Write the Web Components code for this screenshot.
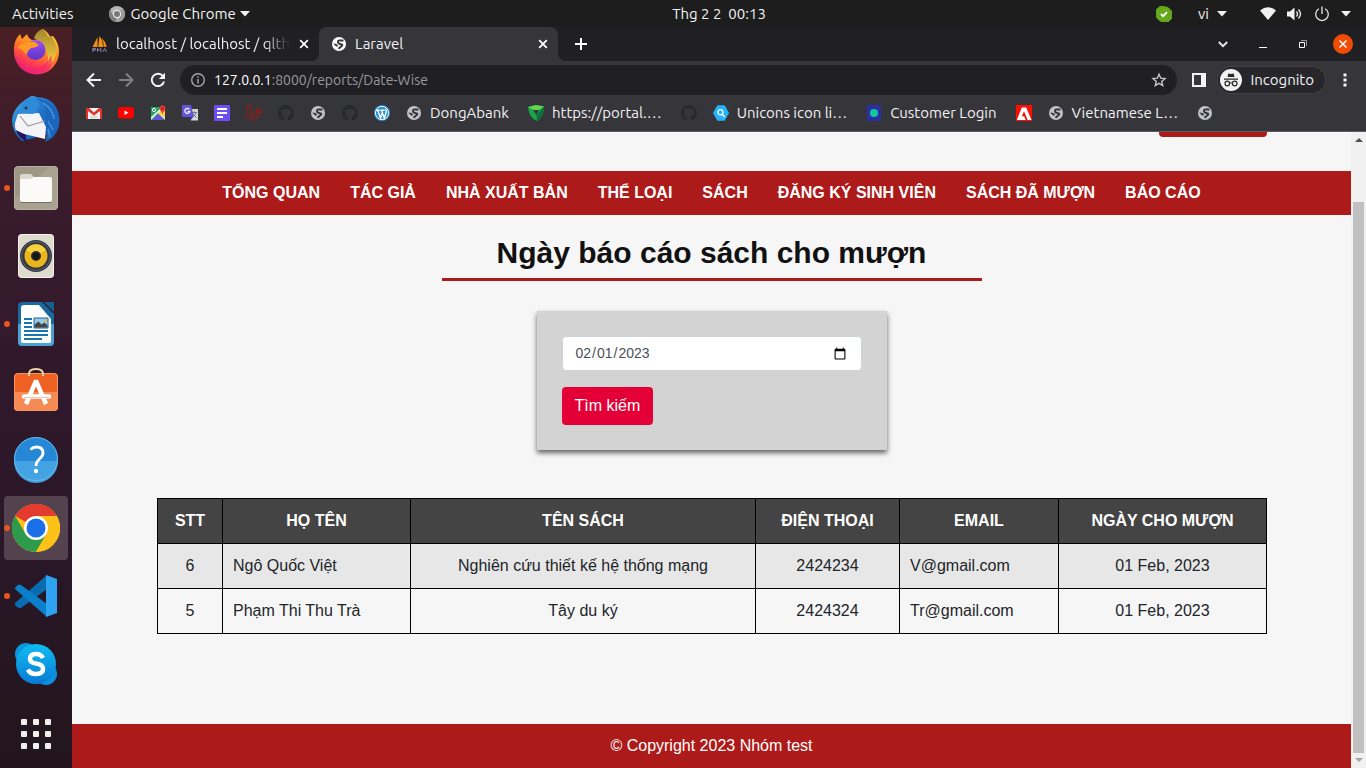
<!DOCTYPE html>
<html lang="vi">
<head>
<meta charset="utf-8">
<title>Laravel</title>
<style>
  html, body { height: 100%; }
  body { margin: 0; background: #1d1d1d; font-family: Ubuntu, "Noto Sans", sans-serif; }
</style>
</head>
<body>
<desktop-shell>
  <top-panel slot="panel"></top-panel>
  <app-dock slot="dock"></app-dock>
  <browser-window>
    <tab-strip slot="tabs"></tab-strip>
    <tool-bar slot="toolbar"></tool-bar>
    <bookmark-bar slot="bookmarks"></bookmark-bar>
    <site-page>
      <site-header slot="header"></site-header>
      <site-nav slot="nav"></site-nav>
      <page-title>Ngày báo cáo sách cho mượn</page-title>
      <date-search></date-search>
      <report-table></report-table>
      <site-footer slot="footer">© Copyright 2023 Nhóm test</site-footer>
    </site-page>
  </browser-window>
</desktop-shell>

<script>
const define = (name, html) => {
  const tpl = document.createElement('template');
  tpl.innerHTML = html;
  customElements.define(name, class extends HTMLElement {
    constructor() {
      super();
      this.attachShadow({ mode: 'open' }).append(tpl.content.cloneNode(true));
    }
  });
};

/* ---------- icons: [viewBox, markup] ---------- */
const github = '<path fill="#24292f" d="M8 0a8 8 0 0 0-2.5 15.6c.4.1.5-.2.5-.4v-1.5c-2.200.5-2.700-1-2.700-1-.4-.9-.9-1.200-.9-1.200-.7-.5.1-.5.1-.5.8.1 1.200.8 1.200.8.7 1.200 1.900.9 2.300.7.1-.5.3-.9.5-1.100-1.800-.2-3.600-.9-3.600-4 0-.9.3-1.600.8-2.100-.1-.2-.4-1 .1-2.100 0 0 .7-.2 2.200.8a7.600 7.600 0 0 1 4 0c1.500-1 2.200-.8 2.200-.8.4 1.100.2 1.900.1 2.100.5.6.8 1.300.8 2.100 0 3.100-1.900 3.800-3.700 4 .3.2.6.7.6 1.500v2.200c0 .2.1.5.6.4A8 8 0 0 0 8 0z"/>';
const globe = (disc, land) => `<circle cx="8" cy="8" r="7" fill="${disc}"/><path fill="none" stroke="${land}" stroke-width="1.900" stroke-linejoin="round" d="M12.500 4.500H9.500Q7 4 7 6T10 8.200 9.500 11L7.500 12.800"/><path fill="${land}" d="M2.200 7.600 5.500 8 7.200 9.800 6 10.800 4.500 10z"/>`;
const ICONS = {
  chromeMono: ['0 0 16 16', '<circle cx="8" cy="8" r="8" fill="#b4b4b4"/><path d="M8 4h7a8 8 0 0 1-7 12l3.500-6" fill="#9a9a9a"/><path d="M1.200 4 4.600 10 8 12l-1 4A8 8 0 0 1 1.200 4z" fill="#7f7f7f"/><circle cx="8" cy="8" r="4.200" fill="#e8e8e8"/><circle cx="8" cy="8" r="3" fill="#777"/>'],
  caret: ['0 0 10 6', '<path d="M0 0h10L5 5.500z" fill="#f2f2f2"/>'],
  skypeOk: ['0 0 16 16', '<path d="M4.500 0 12 1.500 15.500 5 16 12l-4 4-7-.5L.8 12 0 4z" stroke="#66a81c" stroke-linejoin="round" fill="#66a81c"/><path d="M5 8l2.200 2.200L11 6.200" stroke="#fff" stroke-width="1.800" fill="none"/>'],
  wifi: ['0 0 16 13', '<path d="M0 3.500Q8-2.800 16 3.500L8 13z" fill="#f2f2f2"/>'],
  volume: ['0 0 16 14', '<path d="M0 4.500h3L7.500.5v13L3 9.500H0z" fill="#f2f2f2"/><path d="M9.500 4.500q2 2.500 0 5M11.500 2.500q4 4.500 0 9" stroke="#f2f2f2" stroke-width="1.300" fill="none"/>'],
  power: ['0 0 16 16', '<path d="M4.800 2.800a6.300 6.300 0 1 0 6.400 0M8 .5v7.500" stroke="#e6e6e6" stroke-width="1.300" fill="none"/>'],
  pma: ['0 0 16 16', '<path d="M.5 11 5.500 1 5.500 11zM6.200 11 7.500 0Q11 5 11 11zM10.500 3Q14 6 14.500 11H12z" fill="#f29111"/><path d="M10 2 12 11" stroke="#a75c00" fill="none"/><path d="M.8 15.800v-3.300h2.500v1.700H.8M5.500 15.800v-3.300l1.700 1.700 1.700-1.700v3.300M11 15.800l1.700-3.300 1.700 3.300" stroke="#8e87b8" fill="none"/>'],
  globe: ['0 0 16 16', globe('#c1c3cb', '#36363a')],
  globeLight: ['0 0 16 16', globe('#fff', '#36363a')],
  close: ['0 0 10 10', '<path d="M1.200 1.200l7.600 7.600M8.800 1.200 1.200 8.800" stroke="#fff" stroke-width="1.800"/>'],
  plus: ['0 0 12 12', '<path d="M6 0v12M0 6h12" stroke="#fff" stroke-width="2"/>'],
  chevron: ['0 0 10 7', '<path d="M.8 1 5 5.200 9.200 1" stroke="#e4e4e6" stroke-width="2" fill="none"/>'],
  minimize: ['0 0 8 8', '<path d="M0 7.500h8" stroke="#fff"/>'],
  restore: ['0 0 8 8', '<path d="M2 .5h5.500V6" stroke="#98989b" fill="none"/><path d="M.5 2.500h5v5h-5z" stroke="#fff" fill="none"/>'],
  closeWin: ['0 0 20 20', '<circle cx="10" cy="10" r="10" fill="#f24b05"/><path d="M6.500 6.500l7 7M13.500 6.500l-7 7" stroke="#fff" stroke-width="1.500"/>'],
  back: ['0 0 16 16', '<path d="M15 8H2M8 1.500 1.500 8 8 14.500" stroke="#f4f4f5" stroke-width="2" fill="none"/>'],
  forward: ['0 0 16 16', '<path d="M1 8h13M8 1.500 14.500 8 8 14.500" stroke="#808085" stroke-width="2" fill="none"/>'],
  reload: ['0 0 16 16', '<path d="M13 4.200A6.200 6.200 0 1 0 14 9.500" stroke="#f4f4f5" stroke-width="2" fill="none"/><path d="M15 .8V7H8.800z" fill="#f4f4f5"/>'],
  info: ['0 0 16 16', '<circle cx="8" cy="8" r="6.300" stroke="#a4a5a9" stroke-width="1.400" fill="none"/><path d="M8 7v4.500M8 4.300v1.500" stroke="#a4a5a9" stroke-width="1.500"/>'],
  star: ['0 0 16 16', '<path d="M8 2.200l1.700 4 4.300.4-3.300 2.800 1 4.200L8 11.300l-3.700 2.300 1-4.200L2 6.600l4.300-.4z" stroke="#c6c6ca" stroke-width="1.400" fill="none"/>'],
  sidePanel: ['0 0 14 14', '<path d="M1 1h12v12H1z" stroke="#f4f4f5" stroke-width="2" fill="none"/><path d="M9 0h5v14H9z" fill="#f4f4f5"/>'],
  incognito: ['0 0 22 22', '<circle cx="11" cy="11" r="11" fill="#f1f1f2"/><path d="M7.500 8 8.300 4.500l2.700.6 2.700-.6.800 3.500zM4 9.500h14v1.200H4z" fill="#28282b"/><circle cx="7.300" cy="14.500" r="2.300" fill="none" stroke="#28282b" stroke-width="1.200"/><circle cx="14.700" cy="14.500" r="2.300" fill="none" stroke="#28282b" stroke-width="1.200"/><path d="M9.500 14.200q1.500-.8 3 0" stroke="#28282b" fill="none"/>'],
  dots: ['0 0 4 14', '<path d="M.5.500h3v3h-3zM.5 5.500h3v3h-3zM.5 10.500h3v3h-3z" fill="#f4f4f5"/>'],
  gmail: ['0 0 16 16', '<path d="M1 3h14v11H1z" fill="#f3f3f3"/><path d="M3 13.500 8 9l5 4.500z" fill="#dcdcdc"/><path d="M1 3h2l5 4.500L13 3h2l1 1v10h-2V6L8 10.500 2 6v8H0V4z" fill="#e0342a"/>'],
  youtube: ['0 0 16 16', '<rect y="2" width="16" height="11.500" rx="3" fill="#f00"/><path d="M6.500 5.500v4.500l4-2.200z" fill="#fff"/>'],
  maps: ['0 0 16 16', '<path d="M1 2h12v13H1z" fill="#1ea362"/><path d="M1 12 11 3l4 2v10l-7-7-7 7z" fill="#e9e9e9"/><path d="M8 8l7-4v9z" fill="#ffd04b"/><path d="M8 9l6 6H2.500z" fill="#6a50e0"/><circle cx="4" cy="5" r="1.600" fill="none" stroke="#fff"/><path d="M9.500 3.500a3 3 0 1 1 6 0c0 2-2.500 3-3 6-.5-3-3-4-3-6z" fill="#ea3a2d"/><circle cx="12.500" cy="3.500" r="1.100" fill="#8d1c16"/>'],
  translate: ['0 0 16 16', '<path d="M6 4h10v11.500H9z" fill="#d5d5d5"/><path d="M10 7.500h5M12.500 6.500v1M14 7.500q-.5 3-3.500 4.500M11 9l3.500 3.500" stroke="#6c7880" fill="none"/><path d="M0 0h9l3 12H1.500Q0 12 0 10.500z" fill="#6155dd"/><path d="M7.500 12H11l-2.500 3.500z" fill="#3c35a0"/><path d="M7.300 4.300A2.500 2.500 0 1 0 7.800 6.300H5.600" stroke="#fff" stroke-width="1.200" fill="none"/>'],
  form: ['0 0 16 16', '<rect width="16" height="16" rx="1" fill="#6c4df6"/><path d="M3 4h10M3 8h10M3 12h6" stroke="#fff" stroke-width="2"/>'],
  laravel: ['0 0 16 16', '<path d="M.5 1.500v10.500L6.500 15.500 13 11.500V8.500M5.500 1.500V9.500L13 5.500M.5 1.500 3 3 5.500 1.500 3 .5zM10 4.500 12.800 6 15.500 4.500 12.800 3zM10 4.500V7L12.800 8.500 15.500 7V4.500M5.500 9.500 3 11 6.500 13 12.800 9M6.500 13v2.500" stroke="#a81414" stroke-width=".8" fill="none"/>'],
  github: ['0 0 16 16', github],
  wordpress: ['0 0 16 16', '<circle cx="8" cy="8" r="8" fill="#2a8fd0"/><circle cx="8" cy="8" r="6.600" stroke="#fff" stroke-width=".9" fill="none"/><path d="M2.200 5.200h3.500M3.800 5.500l2.700 7.500L8 8.500M6.500 5.200h4M7.500 5.500l2.800 7.500 2-6.200q.3-1.500-1-2.800" stroke="#fff" stroke-width="1.400" fill="none"/>'],
  shield: ['0 0 16 16', '<path d="M8 0l8 1.500Q16.500 11 9 16 1 13 0 2z" fill="#1aa648"/><path d="M0 2l8-2 8 1.500-5 3.500H5.500z" fill="#62d44e"/><path d="M5 5h6l-2.500 5z" fill="#36363a"/><path d="M8.500 10 16 1.500Q16.500 11 9 16z" fill="#0d6f3a"/>'],
  unicons: ['0 0 16 16', '<path d="M4.500.8h7L15.500 8l-4 7.200h-7L.5 8z" fill="#24b3fb" stroke="#24b3fb" stroke-linejoin="round"/><circle cx="7.400" cy="7.200" r="2.600" stroke="#fff" stroke-width="1.200" fill="none"/><path d="M9.200 9.200l2.600 2.800" stroke="#fff" stroke-width="1.400"/>'],
  login: ['0 0 16 16', '<path d="M1 0h14v16H1z" fill="#2c2fa3"/><circle cx="8" cy="8" r="4" fill="#0fc99b"/>'],
  adobe: ['0 0 16 16', '<path d="M0 0h16v16H0z" fill="#fa0f00"/><path d="M5.800 2.500h4.400L15.500 15h-3.800L8 6.300l-2.200 5h2.400l1.500 3.700H.8z" fill="#fff"/>'],
  up: ['0 0 8 4', '<path d="M0 4h8L4 0z" fill="#505050"/>'],
  down: ['0 0 8 4', '<path d="M0 0h8L4 4z" fill="#a3a3a3"/>'],

  firefox: ['0 0 48 48', '<defs><linearGradient id="f1" x1=".8" y1="0" x2=".3" y2="1"><stop offset="0" stop-color="#ffd43d"/><stop offset=".45" stop-color="#ff8a1e"/><stop offset=".75" stop-color="#ff3f4e"/><stop offset="1" stop-color="#e0158a"/></linearGradient><linearGradient id="f2" x1="0" y1="0" x2="0" y2="1"><stop offset="0" stop-color="#a04df0"/><stop offset="1" stop-color="#5936c8"/></linearGradient><linearGradient id="f3" x1="0" y1="0" x2="0" y2="1"><stop offset="0" stop-color="#a0882e"/><stop offset="1" stop-color="#ffcf3e"/></linearGradient></defs><g transform="translate(0 -2)"><path d="M8 8l2 5 5-5q1 4 5 6 5-1 8 1-1-7 3-12 5 3 7 8l3-1q6 7 6 16A22 22 0 0 1 2 26Q1 15 8 8z" fill="url(#f1)"/><path d="M22 12q2-6 8-9 4 2 6 8l3-1q6 8 5.500 17-2 9-9.500 13 3-8-2-18-6-7-11-10z" fill="url(#f3)"/><circle cx="23.500" cy="24" r="10" fill="url(#f2)"/><path d="M5 21q8-6 18-5l4 3q-3 3-8 3-4 3-4 7-5-6-10-8z" fill="#ff9a26"/><path d="M3 28q7 17 22 13 11-2 14-12 4 16-14 18Q8 47 3 28z" fill="#f0256e" opacity=".65"/></g>'],
  thunderbird: ['0 0 48 48', '<defs><linearGradient id="t1" x1="0" y1="0" x2="1" y2="1"><stop offset="0" stop-color="#42a8e8"/><stop offset=".5" stop-color="#1f72c8"/><stop offset="1" stop-color="#1748a6"/></linearGradient></defs><path d="M16 2q5-4 8-1 14 0 20 10 6 12 2 22-2 7-10 12 2-4 1-7L10 45Q0 36 0 24 1 11 16 2z" fill="url(#t1)"/><path d="M6 18l21-1 7 14-1 12L8 37Q2 36 3 27z" fill="#f4f4f6"/><path d="M8 20l8 10 17-5" stroke="#9a9aa5" stroke-width="1.200" fill="none"/><path d="M4 34q2 8 12 12-3-4-2-7z" fill="#28145e"/><path d="M14 3q-5 5-4 14l11 1q6-3 6-10-5-7-13-5z" fill="#2d8bd8"/><path d="M24 2q13 8 10 18 4 12-1 26 15-8 14-25Q43 5 24 2z" fill="#1d66bd"/><path d="M31 7q10 6 11 16M36 25l5 9M36 33l2 8" stroke="#3f96de" stroke-width="1.500" fill="none"/><circle cx="14" cy="12" r="1.500" fill="#26334d"/>'],
  files: ['0 0 48 48', '<rect x="2" y="2" width="44" height="44" rx="4.500" fill="#9f9785"/><path d="M2 35 38 2h4q4 0 4 4v36q0 4-4 4H6q-4 0-4-4z" fill="#aaa290"/><rect x="2.500" y="2.500" width="43" height="43" rx="4" fill="none" stroke="#b6b0a2"/><path d="M8 12q0-2 2-2h9l3 3h16v8H8z" fill="#ddd8ce"/><rect x="8" y="15" width="32" height="23" rx="2.500" fill="#fbfaf8"/><path d="M8 15h11l3-2H38q2 0 2 3v6H8z" fill="#fbfaf8"/><path d="M9 38.500h30" stroke="#777060"/>'],
  rhythmbox: ['0 0 48 48', '<rect x="6" y="2" width="36" height="44" rx="4" fill="#dedace"/><rect x="6.500" y="2.500" width="35" height="43" rx="4" fill="none" stroke="#f4f1e8"/><circle cx="24" cy="24" r="16" fill="#353843"/><circle cx="24" cy="24" r="14.500" fill="none" stroke="#5d6370"/><circle cx="24" cy="24" r="11.500" fill="#ebb61c"/><path d="M14 18a11.500 11.500 0 0 1 20 0L24 24z" fill="#f7d13c"/><circle cx="24" cy="24" r="5" fill="#2d2f37"/><circle cx="24" cy="24" r="3.500" fill="#15161a"/>'],
  writer: ['0 0 48 48', '<path d="M10 2h20l12 12v28q0 4-4 4H10q-4 0-4-4V6q0-4 4-4z" fill="#17699f"/><path d="M6 24h36v18q0 4-4 4H10q-4 0-4-4z" fill="#4ba3d3"/><path d="M12 5h15l12 14v22q0 2-2 2H11q-2 0-2-2V8q0-3 3-3z" fill="#fdfdfd"/><path d="M32 2h10v10z" fill="#15628f"/><path d="M12 19h8M12 23h8M12 27h8M12 31h24M12 35h24M12 39h18" stroke="#1a74ac" stroke-width="2"/><path d="M22 18h14v10H22z" fill="#9cc8e8" stroke="#17699f"/><path d="M22.500 27.500v-3l4-3 3 3 3-2 3 3v2z" fill="#444"/><circle cx="33.500" cy="20.500" r="1.300" fill="#f0b429"/>'],
  software: ['0 0 48 48', '<rect x="2" y="5" width="44" height="38" rx="4" fill="#ef6123"/><path d="M2 24h44v15q0 4-4 4H6q-4 0-4-4z" fill="#f58a55"/><rect x="2.500" y="5.500" width="43" height="37" rx="4" fill="none" stroke="#f9935f"/><path d="M17 8V6q0-5 7-5t7 5v2" stroke="#ebd6a4" stroke-width="2" fill="none"/><path d="M14 36l9.500-22h1L34 36" stroke="#fff" stroke-width="4.500" fill="none"/><path d="M12 28.500h25" stroke="#fff" stroke-width="4.500" stroke-linecap="round"/><path d="M12 29.500h25" stroke="#f5c3ab"/>'],
  help: ['0 0 48 48', '<g transform="translate(0 -1)"><circle cx="24" cy="24" r="22" fill="#2587d6"/><path d="M2 26h44a22 22 0 0 1-44 0z" fill="#43a2e2"/><circle cx="24" cy="24" r="21.500" fill="none" stroke="#69b8ea"/><path d="M18.500 14.500Q21 12 24.500 12q6.500 0 6.500 6 0 3-3.500 6T24 31" stroke="#fff" stroke-width="2.800" fill="none"/><circle cx="24" cy="36" r="2.200" fill="#fff"/></g>'],
  chrome: ['0 0 48 48', '<circle cx="24" cy="24" r="24" fill="#fbc116"/><path d="M24 24 3.200 12A24 24 0 0 1 44.800 12z" fill="#e33b2e"/><path d="M3.200 12A24 24 0 0 0 24 48L34.400 30 24 24 13.600 30z" fill="#2e9b4c"/><path d="M24 12h20.800A24 24 0 0 1 24 48l10.400-18z" fill="#fbc116"/><circle cx="24" cy="24" r="12" fill="#fff"/><circle cx="24" cy="24" r="9.500" fill="#1a6fe8"/>'],
  vscode: ['0 0 48 48', '<path d="M3 31 35 3v14L9 36Q6 37 3 33z" fill="#0a6cb0"/><path d="M3 16q3-5 6-3l26 19v13L3 17z" fill="#0a7fca"/><path d="M34 3l11 4v34l-11 4z" fill="#2ea3f2"/>'],
  skype: ['0 0 48 48', '<defs><linearGradient id="s1" x1="0" y1="0" x2="0" y2="1"><stop offset="0" stop-color="#10bdf2"/><stop offset="1" stop-color="#087ad4"/></linearGradient></defs><circle cx="14" cy="14" r="11" fill="#0a98dc"/><circle cx="34" cy="34" r="11" fill="#0c8fdc"/><circle cx="24" cy="24" r="20" fill="url(#s1)"/><path d="M31 18q-2-4-7-4-6 0-6 5 0 3.500 6 4.500 7 1 7 5.500 0 5-7 5-6 0-8-4.500" stroke="#fff" stroke-width="4.500" fill="none"/>'],
  apps: ['0 0 48 48', '<g fill="#f0efee">' + [9, 21, 33].flatMap(y => [9, 21, 33].map(x => `<rect x="${x}" y="${y}" width="6" height="6" rx="1"/>`)).join('') + '</g>']
};

customElements.define('ui-icon', class extends HTMLElement {
  constructor() { super(); this.attachShadow({ mode: 'open' }); }
  connectedCallback() {
    const [box, body] = ICONS[this.getAttribute('name')];
    const [, , w, h] = box.split(' ');
    this.shadowRoot.innerHTML = `<style>:host{display:block;flex:none}svg{display:block}</style><svg width="${w}" height="${h}" viewBox="${box}" aria-hidden="true">${body}</svg>`;
  }
});

const buttonReset = 'button{border:0;padding:0;margin:0;background:none;color:inherit;font:inherit;display:flex;align-items:center;justify-content:center}';

/* ---------- desktop ---------- */
define('desktop-shell', `<style>
  :host{display:grid;grid-template:auto minmax(0,1fr) / auto minmax(0,1fr);height:100vh;overflow:hidden}
  slot[name=panel]{display:block;grid-column:1/-1}
</style><slot name="panel"></slot><slot name="dock"></slot><slot></slot>`);

define('top-panel', `<style>${buttonReset}
  :host{display:grid;grid-template-columns:72px 1fr auto 1fr;align-items:center;height:27px;background:#1d1d1d;color:#f2f2f2;font-size:15px;line-height:20px}
  .left{grid-column:1/3;display:flex;gap:35px;padding-left:12px}
  .app{gap:6px}
  .app ui-icon:last-child{margin-left:-2px}
  .right{display:flex;justify-content:flex-end;align-items:center;padding-right:15px}
  .right button{gap:8px}
  .skype{margin-right:26px}
  .lang{margin-right:33px}
  .status{display:flex}
  .right .status{gap:11px}
</style>
<div class="left"><button>Activities</button><button class="app"><ui-icon name="chromeMono"></ui-icon>Google Chrome<ui-icon name="caret"></ui-icon></button></div>
<button>Thg 2 2&nbsp; 00:13</button>
<div class="right"><button class="skype" aria-label="Skype"><ui-icon name="skypeOk"></ui-icon></button><button class="lang">vi<ui-icon name="caret"></ui-icon></button>
<button class="status" aria-label="System"><ui-icon name="wifi"></ui-icon><ui-icon name="volume"></ui-icon><ui-icon name="power"></ui-icon><ui-icon name="caret"></ui-icon></button></div>`);

const apps = [['firefox', 'Firefox'], ['thunderbird', 'Thunderbird'], ['files', 'Files', 1], ['rhythmbox', 'Rhythmbox'], ['writer', 'Writer', 1], ['software', 'Software'], ['help', 'Help'], ['chrome', 'Chrome', 2], ['vscode', 'Code', 1], ['skype', 'Skype']];
define('app-dock', `<style>${buttonReset}
  :host{display:flex;flex-direction:column;justify-content:flex-end;gap:6px;width:72px;min-height:0;box-sizing:border-box;overflow:hidden;padding-bottom:2px;background:linear-gradient(#4a1f24,#3a1c2c 20%,#2f182b 50%,#281726 75%,#22161c)}
  nav{display:flex;flex-direction:column;gap:4px}
  button{position:relative;flex:none;width:64px;height:64px;margin:0 4px;border-radius:4px}
  .on{background:#54424f}
  .run::before{content:"";position:absolute;left:0;top:29px;width:6px;height:6px;border-radius:50%;background:#e95420}
</style>
<nav>${apps.map(([i, l, s]) => `<button aria-label="${l}" class="${s ? 'run' : ''} ${s === 2 ? 'on' : ''}"><ui-icon name="${i}"></ui-icon></button>`).join('')}</nav>
<button aria-label="Show Applications"><ui-icon name="apps"></ui-icon></button>`);

/* ---------- browser ---------- */
define('browser-window', `<style>
  :host{display:flex;flex-direction:column;min-width:0;min-height:0;background:#36363a;color:#f1f1f3}
  .view{flex:1;display:flex;min-height:0;border-top:1px solid #5b5b5f;background:#f6f6f6}
  slot:not([name]){display:block;flex:1;min-width:0}
</style><slot name="tabs"></slot><slot name="toolbar"></slot><slot name="bookmarks"></slot>
<div class="view"><slot></slot><scroll-rail></scroll-rail></div>`);

define('tab-strip', `<style>${buttonReset}
  :host{display:flex;height:34px;background:#202024;padding:0 3px 0 8px;font-size:15px;line-height:20px}
  .tab{position:relative;display:flex;align-items:center;gap:8px;flex:0 1 239px;min-width:0;box-sizing:border-box;padding:0 9px 0 12px}
  .tab span{flex:1;overflow:hidden;white-space:nowrap}
  .fade{-webkit-mask:linear-gradient(90deg,#000 85%,transparent);mask:linear-gradient(90deg,#000 85%,transparent)}
  .active{background:#36363a;border-radius:8px 8px 0 0}
  .active::before,.active::after{content:"";position:absolute;bottom:0;width:8px;height:8px}
  .active::before{left:-8px;background:radial-gradient(circle at 0 0,transparent 8px,#36363a 8px)}
  .active::after{right:-8px;background:radial-gradient(circle at 100% 0,transparent 8px,#36363a 8px)}
  button{width:40px}
  .tab button{width:12px}
  .new{margin-left:3px}
  .win{display:flex;margin-left:auto}
</style>
<div class="tab"><ui-icon name="pma"></ui-icon><span class="fade">localhost / localhost / qlth</span><button aria-label="Close tab"><ui-icon name="close"></ui-icon></button></div>
<div class="tab active"><ui-icon name="globeLight"></ui-icon><span>Laravel</span><button aria-label="Close tab"><ui-icon name="close"></ui-icon></button></div>
<button class="new" aria-label="New tab"><ui-icon name="plus"></ui-icon></button>
<div class="win"><button aria-label="Search tabs"><ui-icon name="chevron"></ui-icon></button><button aria-label="Minimize"><ui-icon name="minimize"></ui-icon></button><button aria-label="Restore"><ui-icon name="restore"></ui-icon></button><button aria-label="Close"><ui-icon name="closeWin"></ui-icon></button></div>`);

define('tool-bar', `<style>${buttonReset}
  :host{display:flex;align-items:center;padding:4px 5px 4px 6px;font-size:15px;line-height:20px}
  button{width:32px;height:30px}
  .url{flex:1;display:flex;align-items:center;gap:8px;height:30px;margin:0 6px;padding:0 10px;border-radius:15px;background:#202024;font-size:14px;color:#98999d}
  .url span{flex:1}
  b{font-weight:400;color:#fff}
  .url button{width:16px}
  .mode{width:auto;height:26px;gap:8px;margin:0 4px 0 3px;padding:0 11px 0 2px;border-radius:14px;background:#27272b;box-shadow:0 0 0 1px #404045}
</style>
<button aria-label="Back"><ui-icon name="back"></ui-icon></button><button aria-label="Forward"><ui-icon name="forward"></ui-icon></button><button aria-label="Reload"><ui-icon name="reload"></ui-icon></button>
<div class="url"><ui-icon name="info"></ui-icon><span><b>127.0.0.1</b>:8000/reports/Date-Wise</span><button aria-label="Bookmark"><ui-icon name="star"></ui-icon></button></div>
<button aria-label="Side panel"><ui-icon name="sidePanel"></ui-icon></button>
<button class="mode"><ui-icon name="incognito"></ui-icon>Incognito</button>
<button aria-label="Menu"><ui-icon name="dots"></ui-icon></button>`);

const marks = [['gmail'], ['youtube'], ['maps'], ['translate'], ['form'], ['laravel'], ['github'], ['globe'], ['github'], ['wordpress'], ['globe', 'DongAbank'], ['shield', 'https://portal.…'], ['github'], ['unicons', 'Unicons icon li…'], ['login', 'Customer Login'], ['adobe'], ['globe', 'Vietnamese L…'], ['globe']];
define('bookmark-bar', `<style>
  :host{display:flex;gap:16px;padding:4px 14px 8px;font-size:15px;line-height:20px}
  a{display:flex;align-items:center;gap:8px;color:inherit;text-decoration:none;white-space:nowrap}
  span{padding-right:3px}
</style>${marks.map(([i, t]) => `<a href="#" aria-label="${t || i}"><ui-icon name="${i}"></ui-icon>${t ? `<span>${t}</span>` : ''}</a>`).join('')}`);

define('scroll-rail', `<style>
  :host{display:flex;flex-direction:column;align-items:center;width:15px;box-sizing:border-box;padding:6px 0;background:#f1f1f1}
  .track{flex:1;display:flex;flex-direction:column;justify-content:flex-end;width:11px;margin:5px 0}
  .thumb{height:91%;background:#c1c1c1}
</style><ui-icon name="up"></ui-icon><div class="track"><div class="thumb"></div></div><ui-icon name="down"></ui-icon>`);

/* ---------- web page ---------- */
define('site-page', `<style>
  :host{display:flex;flex-direction:column;height:100%;font-family:"Liberation Sans",Arial,sans-serif;font-size:16px;line-height:24px;color:#212529;background:#f6f6f6}
  main{flex:1}
</style><slot name="header"></slot><slot name="nav"></slot><main><slot></slot></main><slot name="footer"></slot>`);

define('site-header', `<style>
  :host{display:block}
  div{display:flex;justify-content:flex-end;max-width:1110px;margin:0 auto;padding-bottom:34px}
  button{width:108px;height:5px;padding:0;border:0;border-radius:0 0 4px 4px;background:#ad1a1a}
</style><div><button aria-label="Tài khoản"></button></div>`);

define('site-nav', `<style>
  :host{display:block;background:#ad1a1a}
  ul{display:flex;justify-content:center;gap:30px;margin:0;padding:10px 0;list-style:none}
  a{color:#fff;font-weight:700;text-decoration:none}
</style><ul>${['TỔNG QUAN', 'TÁC GIẢ', 'NHÀ XUẤT BẢN', 'THỂ LOẠI', 'SÁCH', 'ĐĂNG KÝ SINH VIÊN', 'SÁCH ĐÃ MƯỢN', 'BÁO CÁO'].map(t => `<li><a href="#">${t}</a></li>`).join('')}</ul>`);

define('page-title', `<style>
  :host{display:block}
  h2{max-width:540px;margin:20px auto 30px;padding-bottom:7px;border-bottom:3px solid #ad1a1a;text-align:center;font-size:30px;line-height:36px;color:#111}
</style><h2><slot></slot></h2>`);

define('date-search', `<style>
  :host{display:block;max-width:350px;margin:0 auto 48px}
  form{padding:25px;background:#d3d3d3;box-shadow:0 3px 5px rgba(0,0,0,.6)}
  input{display:block;width:100%;height:35px;box-sizing:border-box;margin:0 0 16px;padding:6px 12px;border:1px solid #ced4da;border-radius:4px;background:#fff;color:#495057;font:14px/21px "Liberation Sans",Arial,sans-serif}
  button{height:38px;padding:0 13px;border:0;border-radius:4px;background:#e40036;color:#fff;font:inherit}
</style><form><input type="date" value="2023-02-01" aria-label="Ngày"><button type="button">Tìm kiếm</button></form>`);

define('report-table', `<style>
  :host{display:block;max-width:1109px;margin:0 auto}
  table{width:100%;table-layout:fixed;border-collapse:collapse;text-align:center}
  th,td{border:1px solid #000;padding:10px}
  th{background:#444;color:#fff}
  tbody tr:nth-child(odd){background:#e7e7e7}
  .l{text-align:left}
</style><table><colgroup><col style="width:65px"><col style="width:188px"><col style="width:345px"><col style="width:144px"><col style="width:159px"><col style="width:208px"></colgroup>
<thead><tr><th>STT</th><th>HỌ TÊN</th><th>TÊN SÁCH</th><th>ĐIỆN THOẠI</th><th>EMAIL</th><th>NGÀY CHO MƯỢN</th></tr></thead>
<tbody><tr><td>6</td><td class="l">Ngô Quốc Việt</td><td>Nghiên cứu thiết kế hệ thống mạng</td><td>2424234</td><td class="l">V@gmail.com</td><td>01 Feb, 2023</td></tr>
<tr><td>5</td><td class="l">Phạm Thi Thu Trà</td><td>Tây du ký</td><td>2424324</td><td class="l">Tr@gmail.com</td><td>01 Feb, 2023</td></tr></tbody></table>`);

define('site-footer', `<style>
  :host{display:block;padding:10px 0;background:#ad1a1a;color:#fff;text-align:center}
</style><slot></slot>`);
</script>
</body>
</html>
